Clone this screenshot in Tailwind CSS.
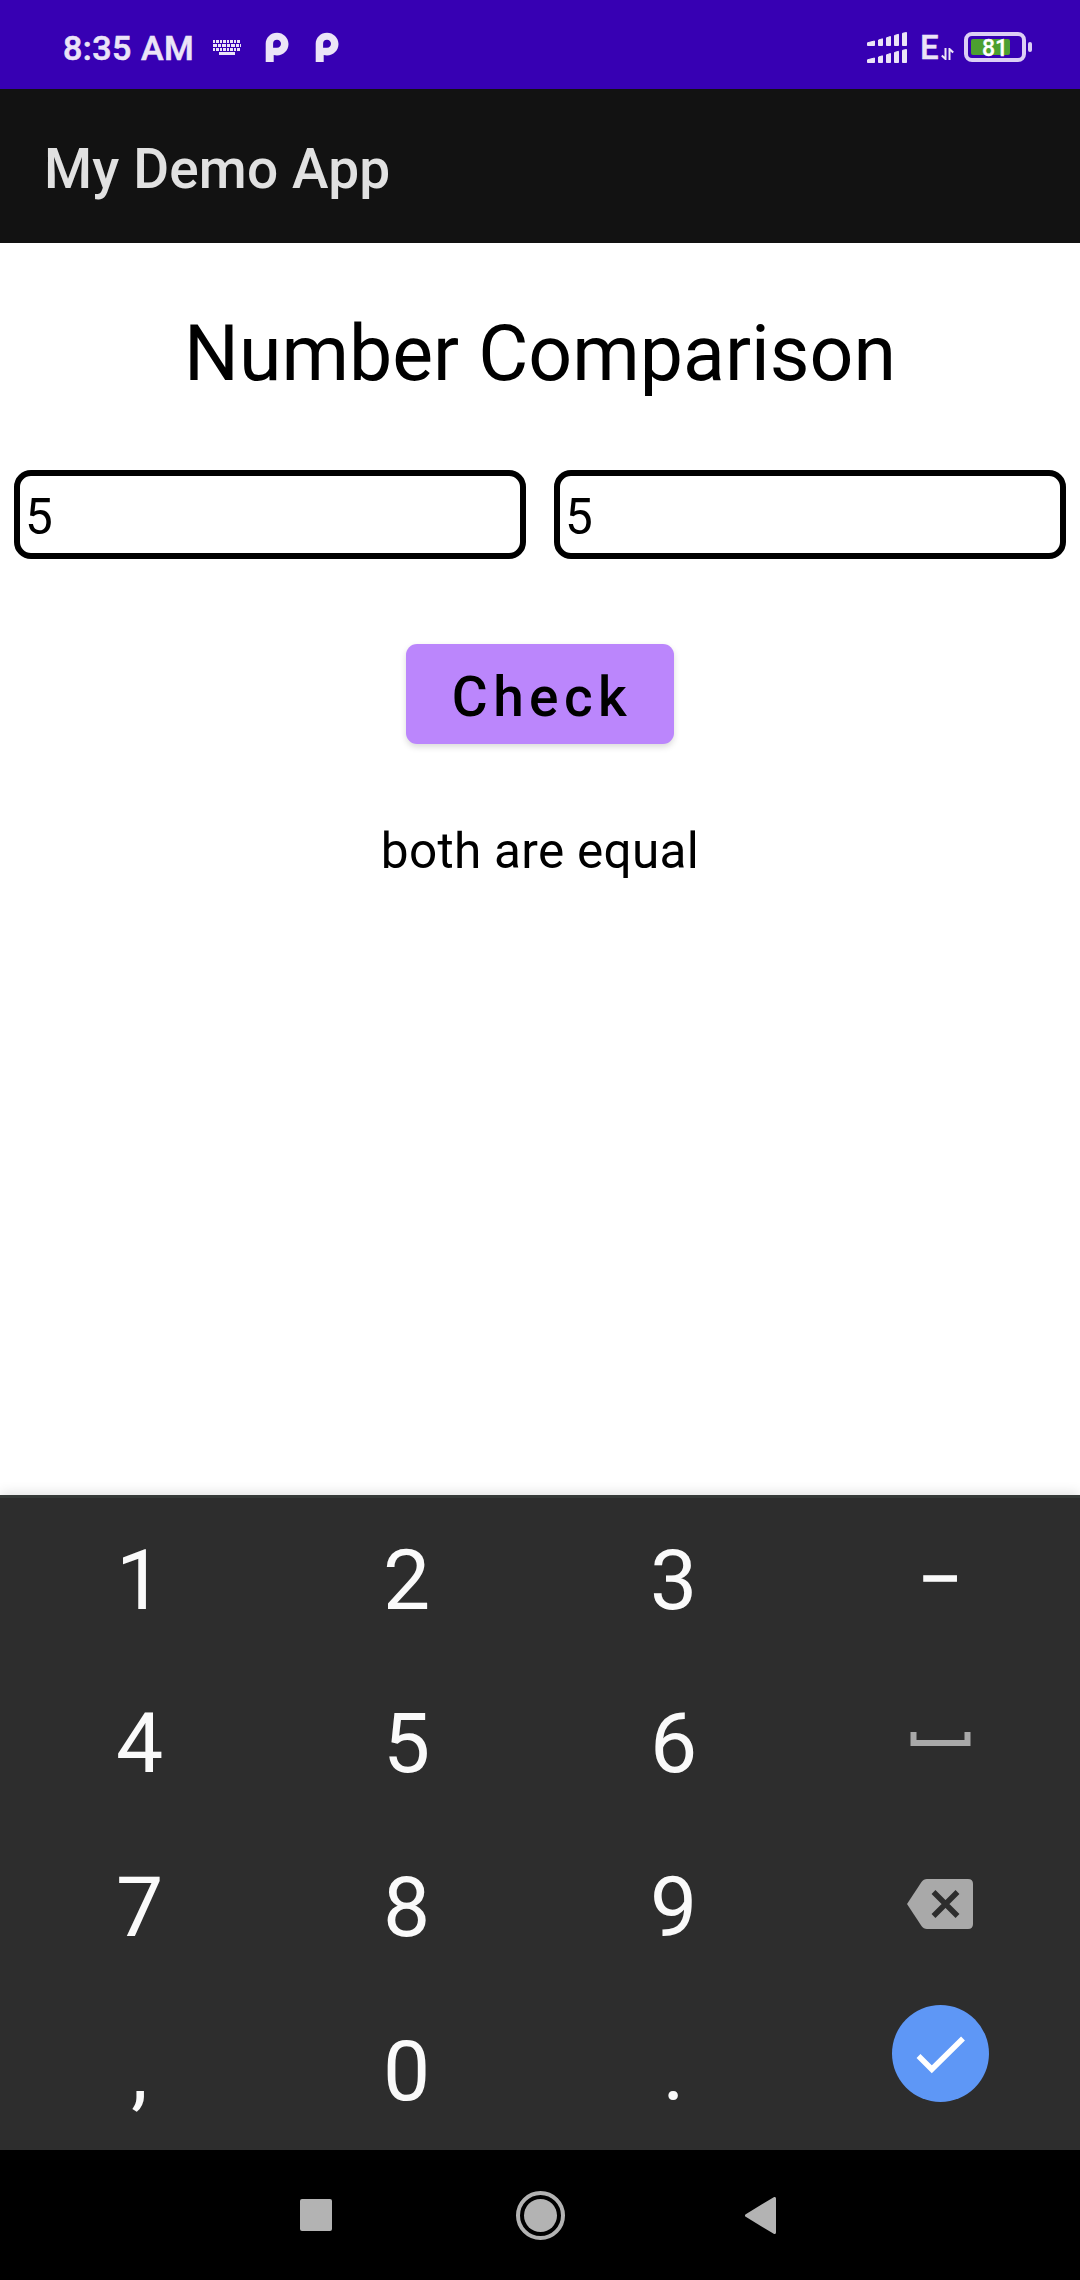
<!DOCTYPE html>
<html lang="en">
<head>
<meta charset="utf-8">
<title>My Demo App</title>
<script src="https://cdn.jsdelivr.net/npm/@tailwindcss/browser@4"></script>
</head>
<body class="font-[Roboto,sans-serif] bg-white">
<div class="w-[1080px] h-[2280px] flex flex-col overflow-hidden bg-white">
  <!-- Status bar -->
  <header class="h-[89px] shrink-0 bg-[#3700b3] text-[#ebe4f7] flex items-start justify-between pl-[63px] pr-12">
    <div class="flex items-start">
      <span class="w-[150px] h-[40px] mt-[28px] text-[34px] leading-[40px] font-medium tracking-[0.5px] [-webkit-text-stroke:0.6px_#ebe4f7] whitespace-nowrap">8:35 AM</span>
      <svg class="mt-[40px]" width="28" height="15" viewBox="0 0 28 15" fill="none" stroke="#ebe4f7" stroke-width="3">
        <path d="M0 1.500H28" stroke-dasharray="2 1 3 1"/>
        <path d="M0 5.500H28" stroke-dasharray="4 1 3 1"/>
        <path d="M0 9.500H28" stroke-dasharray="2 1 3 1"/>
        <path d="M6 13.500H22"/>
      </svg>
      <svg class="mt-[32px] ml-[24px]" width="24" height="30" viewBox="0 0 24 30"><path fill="#ebe4f7" fill-rule="evenodd" d="M.7 30V11.8C.7 5.400 5.800.7 12 .7S23.500 5.600 23.500 12 18.400 23.400 12 23.400c-1.200 0-2.300-.2-3.300-.5V30ZM12 7.800c-2.500 0-3.900 1.600-3.900 4v4H12c2.400 0 4-1.700 4-4s-1.600-4-4-4Z"/></svg>
      <svg class="mt-[32px] ml-[26px]" width="24" height="30" viewBox="0 0 24 30"><path fill="#ebe4f7" fill-rule="evenodd" d="M.7 30V11.8C.7 5.400 5.800.7 12 .7S23.500 5.600 23.500 12 18.400 23.400 12 23.400c-1.200 0-2.300-.2-3.300-.5V30ZM12 7.800c-2.500 0-3.900 1.600-3.900 4v4H12c2.400 0 4-1.700 4-4s-1.600-4-4-4Z"/></svg>
    </div>
    <div class="flex items-start">
      <svg class="mt-[32px]" width="41" height="31" viewBox="0 0 41 31" fill="#ebe4f7" stroke="#ebe4f7" stroke-width="1" stroke-linejoin="round">
        <path d="M.5 10.800 7.500 9V13.500H.5ZM11.500 8 15.500 6.800V13.500H11.500ZM19.500 5.800 23.500 4.500V13.500H19.500ZM27.500 3.500 31.500 2.300V13.500H27.500ZM35.500 1.300 39.500.5V13.500H35.500Z"/>
        <path d="M.5 27.800 7.500 26V30.500H.5ZM11.500 25 15.500 23.800V30.500H11.500ZM19.500 22.800 23.500 21.500V30.500H19.500ZM27.500 20.500 31.500 19.300V30.500H27.500ZM35.500 18.300 39.500 17.500V30.500H35.500Z"/>
      </svg>
      <span class="ml-[12px] w-[21px] h-[40px] mt-[28px] text-[33px] leading-[40px] font-medium [-webkit-text-stroke:0.4px_#ebe4f7]">E</span>
      <svg class="mt-[48px]" width="13" height="12" viewBox="0 0 13 12" fill="none" stroke="#ebe4f7" stroke-width="2"><path d="M4.500 0V11L.8 7.500M8.500 12V1L12.200 4.500"/></svg>
      <div class="ml-[10px] mt-[32px] w-[62px] h-[30px] border-[4px] border-[#dccff5] rounded-[8px] p-[3px]">
        <div class="w-[39px] h-4 rounded-[2px] bg-[#4c9f30] text-white text-[23px] leading-[19px] font-medium pl-[11px] whitespace-nowrap [-webkit-text-stroke:0.3px_#fff]">81</div>
      </div>
      <div class="ml-[2px] mt-[42px] w-1 h-[10px] rounded-[2px] bg-[#dccff5]"></div>
    </div>
  </header>

  <!-- App bar -->
  <div class="h-[154px] shrink-0 bg-[#121212] flex items-center pl-11 pt-[6px]">
    <h1 class="text-[55px] leading-[64px] font-medium tracking-[0.15px] text-[#e1e1e1]">My Demo App</h1>
  </div>

  <!-- Content -->
  <main class="h-[1252px] shrink-0 flex flex-col items-center text-black">
    <h2 class="mt-[66px] text-[77px] leading-[90px]">Number Comparison</h2>
    <div class="mt-[71px] w-full px-[14px] flex gap-7">
      <div class="flex-1 h-[89px] border-[6px] border-black rounded-[17px] pl-[5px] pt-[3px] text-[49.5px] leading-[77px]">5</div>
      <div class="flex-1 h-[89px] border-[6px] border-black rounded-[17px] pl-[5px] pt-[3px] text-[49.5px] leading-[77px]">5</div>
    </div>
    <button class="mt-[85px] w-[268px] h-[100px] rounded-[11px] bg-[#bb86fc] text-[55px] leading-[64px] font-medium tracking-[5.4px] pt-[6px] pl-1 shadow-[0_3px_6px_rgba(0,0,0,0.15)]">Check</button>
    <p class="mt-[77px] text-[49.5px] leading-[60px] tracking-[0.3px]">both are equal</p>
  </main>

  <!-- Numeric keypad -->
  <section class="h-[655px] shrink-0 bg-[#2d2d2d] border-t-[3px] border-[#363a38] shadow-[0_-2px_12px_rgba(0,0,0,0.12)] px-[6px] grid grid-cols-4 grid-rows-[163px_164px_163.600px_163.600px] overflow-hidden text-[84px] leading-[166px] text-center text-[#fafafa]">
    <div>1</div><div>2</div><div>3</div><div class="text-[66px] leading-[164px] [-webkit-text-stroke:1.4px_#fafafa]">–</div>
    <div>4</div><div>5</div><div>6</div>
    <div class="flex justify-center items-start pt-[71px] pr-px">
      <svg width="61" height="14" viewBox="0 0 61 14" fill="none" stroke="#a9a9a9" stroke-width="6"><path d="M3.500 0V11H57.500V0"/></svg>
    </div>
    <div>7</div><div>8</div><div>9</div>
    <div class="flex justify-center items-start pt-[54px] pr-[2px]">
      <svg width="66" height="50" viewBox="0 0 66 50"><path fill="#a9a9a9" d="M0 25 14.500 3Q16.500 0 20 0H61Q66 0 66 5V45Q66 50 61 50H20Q16.500 50 14.500 47Z"/><path d="M26.500 13 50.500 37M50.500 13 26.500 37" stroke="#2d2d2d" stroke-width="5.500"/></svg>
    </div>
    <div>,</div><div>0</div><div>.</div>
    <div class="flex justify-center items-start pt-[16px]">
      <svg width="97" height="97" viewBox="0 0 97 97"><circle cx="48.500" cy="48.500" r="48.500" fill="#5e97f6"/><path d="M26.500 51 39.800 64.300 71 33.500" fill="none" stroke="#fff" stroke-width="5.500"/></svg>
    </div>
  </section>

  <!-- Navigation bar -->
  <nav class="h-[130px] shrink-0 bg-black flex items-center justify-between pl-[300px] pr-[304px]">
    <div class="w-8 h-8 rounded-[2px] bg-[#b3b3b3]"></div>
    <svg class="ml-[3px]" width="49" height="49" viewBox="0 0 49 49"><circle cx="24.500" cy="24.500" r="22.500" fill="none" stroke="#b3b3b3" stroke-width="4"/><circle cx="24.500" cy="24.500" r="16.500" fill="#b3b3b3"/></svg>
    <svg width="31" height="37" viewBox="0 0 31 37"><path d="M1.500 18.500 29.500 1.500V35.500Z" fill="#b3b3b3" stroke="#b3b3b3" stroke-width="3" stroke-linejoin="round"/></svg>
  </nav>
</div>
</body>
</html>
